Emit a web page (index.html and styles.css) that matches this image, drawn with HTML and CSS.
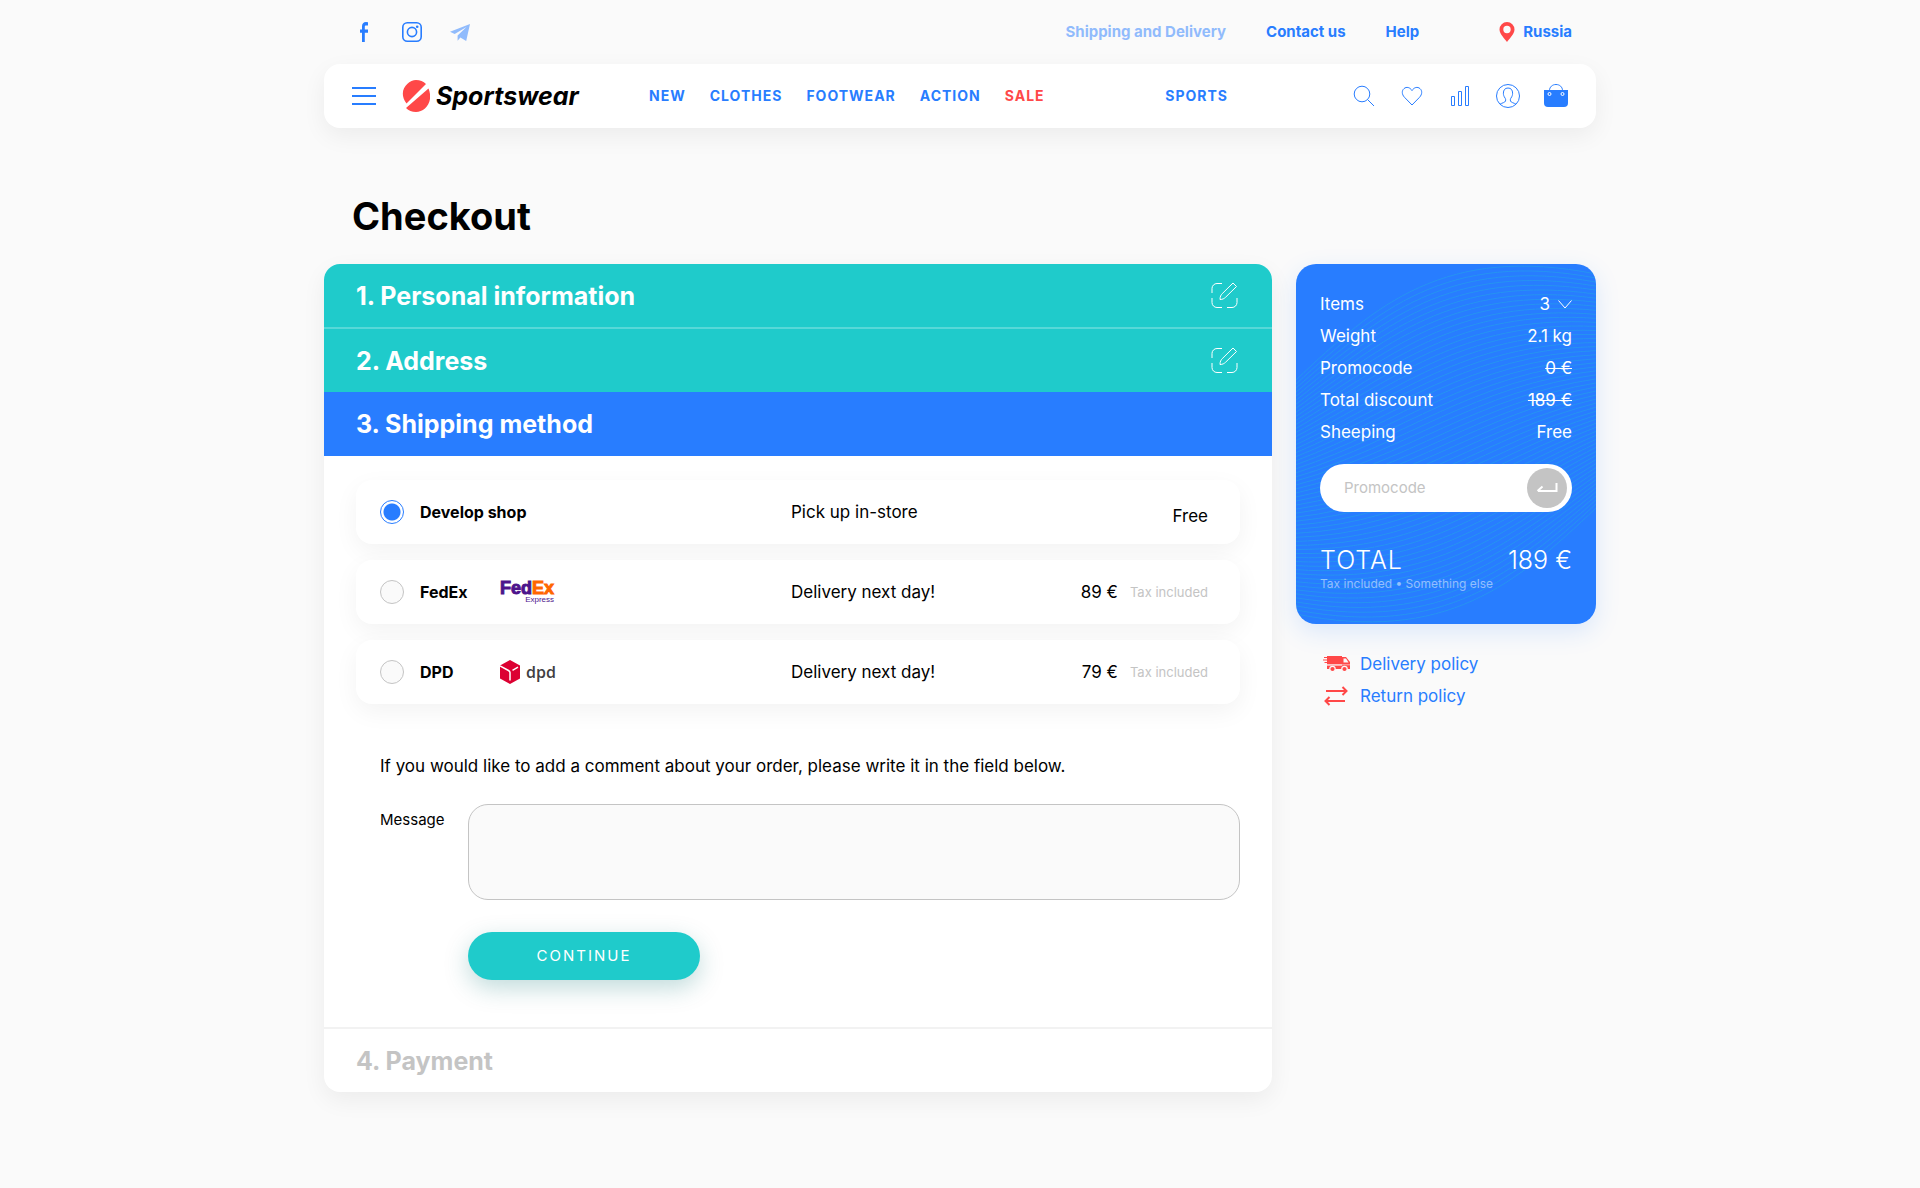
FILE: index.html
```html
<!DOCTYPE html>
<html lang="en">
<head>
<meta charset="utf-8">
<meta name="viewport" content="width=device-width, initial-scale=1">
<title>Checkout – Sportswear</title>
<link rel="stylesheet" href="styles.css">
</head>
<body>
<div class="page">
  <div class="topbar">
    <div class="social">
      <a href="#" aria-label="Facebook"><svg class="icon" viewBox="0 0 24 24"><path fill="currentColor" d="M16 2.2v3.2h-1.8c-1 0-1.4.5-1.4 1.4v2.7H16v3.2h-3.2V22H10v-9.300H8V9.500h2V6.300C10 3.600 11.500 2 14 2z"/></svg></a>
      <a href="#" aria-label="Instagram"><svg class="icon" viewBox="0 0 24 24" fill="none" stroke="currentColor" stroke-width="1.600"><rect x="2.800" y="2.800" width="18.400" height="18.400" rx="4.500"/><circle cx="12" cy="12" r="4.600"/><circle cx="17.200" cy="6.800" r="1.300" fill="currentColor" stroke="none"/></svg></a>
      <a class="faded" href="#" aria-label="Telegram"><svg class="icon" viewBox="0 0 24 24"><path fill="currentColor" d="M22 4 2 11.700l4.700 2.400L18.500 7 9.600 15.500v5.300l2.800-3.300 5.800 3.500z"/></svg></a>
    </div>
    <nav class="toplinks" aria-label="Service">
      <a class="faded" href="#">Shipping and Delivery</a>
      <a href="#">Contact us</a>
      <a href="#">Help</a>
    </nav>
    <a class="country" href="#"><svg class="pin" viewBox="0 0 16 20"><path fill="#ff4848" fill-rule="evenodd" d="M8 0a7.500 7.500 0 0 0-7.500 7.500C.5 12 6 17 8 20c2-3 7.500-8 7.500-12.500A7.500 7.500 0 0 0 8 0m0 3.800a3.700 3.700 0 1 1 0 7.400 3.700 3.700 0 0 1 0-7.400"/></svg>Russia</a>
  </div>

  <header class="header">
    <button class="iconbtn" type="button" aria-label="Menu"><svg class="icon" viewBox="0 0 24 24" stroke="currentColor" stroke-width="2"><path d="M0 4h24M0 12h24M0 20h24"/></svg></button>
    <a class="logo" href="#"><svg class="mark" viewBox="0 0 28 32"><path fill="#ff4848" d="M4.500 23.500C-5 11 6 0 14 0c4 0 7.500 1.300 10 4zM26.500 8.500C32 22 23 32 14 32c-4 0-7.500-1.600-10-4z"/></svg>Sportswear</a>
    <nav class="nav" aria-label="Catalogue">
      <a href="#">NEW</a>
      <a href="#">CLOTHES</a>
      <a href="#">FOOTWEAR</a>
      <a href="#">ACTION</a>
      <a class="sale" href="#">SALE</a>
    </nav>
    <a class="sports" href="#">SPORTS</a>
    <div class="tools">
      <button class="iconbtn" type="button" aria-label="Search"><svg class="icon" viewBox="0 0 24 24" fill="none" stroke="currentColor"><circle cx="10" cy="10" r="7.800"/><path d="m15.500 15.500 6.500 6.500"/></svg></button>
      <a href="#" aria-label="Favourites"><svg class="icon" viewBox="0 0 24 24" fill="none" stroke="currentColor"><path d="M12 21 4.500 13.300C1.500 10.200 1.800 6.400 4 4.600c2.500-2.200 6-1.300 8 2 2-3.300 5.500-4.200 8-2 2.200 1.800 2.500 5.600-.5 8.700z"/></svg></a>
      <a href="#" aria-label="Compare"><svg class="icon" viewBox="0 0 24 24" fill="none" stroke="currentColor"><path d="M3.500 12.500h3v9h-3zM10.500 7.500h3v14h-3zM17.500 2.500h3v19h-3z"/></svg></a>
      <a href="#" aria-label="Account"><svg class="icon" viewBox="0 0 24 24" fill="none" stroke="currentColor"><circle cx="12" cy="12" r="11.500"/><path d="M4 20.200c2-1.400 5-1.500 5.500-3.200.4-1.500 0-2.300-.5-3-1.200-1.800-1.600-3-1.600-4.800C7.400 6 9 4 12 4s4.600 2 4.600 5.200c0 1.800-.4 3-1.600 4.800-.5.7-.9 1.500-.5 3 .5 1.700 3.500 1.800 5.500 3.200"/></svg></a>
      <a href="#" aria-label="Cart"><svg class="icon" viewBox="0 0 24 24"><path fill="none" stroke="currentColor" d="M5.500 8V6.500c0-3.500 2.800-6 6.500-6s6.500 2.500 6.500 6V8"/><path fill="currentColor" d="M0 6h24v13a4 4 0 0 1-4 4H4a4 4 0 0 1-4-4z"/><circle cx="5.500" cy="10" r="1.500" fill="none" stroke="#fff"/><circle cx="18.500" cy="10" r="1.500" fill="none" stroke="#fff"/></svg></a>
    </div>
  </header>

  <h1 class="title">Checkout</h1>

  <main class="layout">
    <section class="steps">
      <div class="step done">
        <h2>1. Personal information</h2>
        <button class="iconbtn" type="button" aria-label="Edit personal information"><svg class="edit" viewBox="0 0 28 28" fill="none" stroke="currentColor"><path d="M12 1.500H7a5 5 0 0 0-5 5V11M2 16v4.500a5 5 0 0 0 5 5h5M17 25.500h5a5 5 0 0 0 5-5V16"/><path d="M10 17.500c0-3 1-4.500 2.200-5.800L23 1l3.500 3.500L15.500 15.300c-1.300 1.200-2.800 2.200-5.500 2.200z"/></svg></button>
      </div>
      <div class="step done ruled">
        <h2>2. Address</h2>
        <button class="iconbtn" type="button" aria-label="Edit address"><svg class="edit" viewBox="0 0 28 28" fill="none" stroke="currentColor"><path d="M12 1.500H7a5 5 0 0 0-5 5V11M2 16v4.500a5 5 0 0 0 5 5h5M17 25.500h5a5 5 0 0 0 5-5V16"/><path d="M10 17.500c0-3 1-4.500 2.200-5.800L23 1l3.500 3.500L15.500 15.300c-1.300 1.200-2.800 2.200-5.500 2.200z"/></svg></button>
      </div>
      <div class="step current"><h2>3. Shipping method</h2></div>
      <form class="shipping">
        <div class="options">
          <label class="option">
            <input type="radio" name="method" checked>
            <span class="carrier">Develop shop</span>
            <span class="when">Pick up in-store</span>
            <span class="price free">Free</span>
          </label>
          <label class="option">
            <input type="radio" name="method">
            <span class="carrier">FedEx</span>
            <span class="brand fedex"><span class="fedex-name">Fed<span class="ex">Ex</span></span><span class="express">Express</span></span>
            <span class="when">Delivery next day!</span>
            <span class="price">89 € <small>Tax included</small></span>
          </label>
          <label class="option">
            <input type="radio" name="method">
            <span class="carrier">DPD</span>
            <span class="brand dpd"><svg class="cube" viewBox="0 0 20 24"><path fill="#dc0032" d="m10 0 10 5.500v13L10 24 0 18.500v-13z"/><path fill="none" stroke="#fff" stroke-width="1.500" d="m0 5.800 8.500 4.700c1 .6 1.500 1 1.500 2V20.500M12.500 10.300 18 7.200"/></svg>dpd</span>
            <span class="when">Delivery next day!</span>
            <span class="price">79 € <small>Tax included</small></span>
          </label>
        </div>
        <p class="hint">If you would like to add a comment about your order, please write it in the field below.</p>
        <div class="comment">
          <label for="message">Message</label>
          <textarea id="message"></textarea>
          <button class="continue" type="submit">CONTINUE</button>
        </div>
      </form>
      <div class="step pending"><h2>4. Payment</h2></div>
    </section>

    <aside>
      <section class="summary">
        <svg class="waves" id="waves" viewBox="0 0 300 360" preserveAspectRatio="none" aria-hidden="true"></svg>
        <dl class="rows">
          <div><dt>Items</dt><dd><button class="items" type="button">3 <svg class="chevron" viewBox="0 0 14 9" fill="none" stroke="currentColor"><path d="m.5.5 6.500 7.500L13.500.5"/></svg></button></dd></div>
          <div><dt>Weight</dt><dd>2.1 kg</dd></div>
          <div><dt>Promocode</dt><dd><s>0 €</s></dd></div>
          <div><dt>Total discount</dt><dd><s>189 €</s></dd></div>
          <div><dt>Sheeping</dt><dd>Free</dd></div>
        </dl>
        <form class="promo">
          <input type="text" placeholder="Promocode" aria-label="Promocode">
          <button type="submit" aria-label="Apply promocode"><svg viewBox="0 0 24 12" fill="none" stroke="#fff" stroke-width="2"><path d="M21.500 1v8H3M7.500 4.500 2.500 9"/></svg></button>
        </form>
        <div class="total"><span class="total-label">TOTAL</span><span>189 €</span></div>
        <p class="note">Tax included • Something else</p>
      </section>
      <ul class="policies">
        <li><a href="#"><svg viewBox="0 0 28 20"><path fill="#ff4848" d="M5 2h15v8.500H5zM20 3h4l4 5v7H5v-3.500h15z"/><path stroke="#ff4848" d="M2 3.500h6M1 6h6M2.500 8.500H7"/><path fill="#fafafa" d="M21.500 4.500H24l2.500 4h-5z"/><path stroke="#fafafa" stroke-width=".6" d="M5 10.800h23"/><g fill="#ff4848" stroke="#fafafa" stroke-width="1.200"><circle cx="10.500" cy="15" r="2.700"/><circle cx="22.500" cy="15" r="2.700"/></g></svg>Delivery policy</a></li>
        <li><a href="#"><svg viewBox="0 0 28 20" fill="none" stroke="#ff4848" stroke-width="2"><path d="M4 5h20M20.500 1l4 4-4 4M23 15H4M7.500 11l-4 4 4 4"/></svg>Return policy</a></li>
      </ul>
    </aside>
  </main>
</div>
<script src="waves.js"></script>
</body>
</html>
```
FILE: styles.css
```css
:root {
  --blue: #287dff;
  --teal: #1fcbcb;
  --red: #ff4848;
  --grey: #c4c4c4;
  --paper: #fafafa;
  --shadow: 0 8px 24px rgba(0, 0, 0, .06);
}

*, *::before, *::after { box-sizing: border-box; }

body {
  margin: 0;
  background: var(--paper);
  color: #000;
  font: 17px/32px Inter, "Open Sans", sans-serif;
}

h1, h2, p, dl, dd, ul { margin: 0; padding: 0; }
ul { list-style: none; }
a { color: inherit; text-decoration: none; }
svg { display: block; flex: none; }
button, input, textarea { font: inherit; color: inherit; }
button { border: 0; padding: 0; background: none; cursor: pointer; }

.page { max-width: 1272px; margin: 0 auto; padding-bottom: 96px; }
.icon { width: 24px; height: 24px; }
.faded { opacity: .5; }

.topbar {
  display: flex;
  align-items: center;
  height: 64px;
  padding: 0 24px 0 28px;
  color: var(--blue);
  font-size: 14px;
  font-weight: 700;
}
.social { display: flex; gap: 24px; }
.toplinks { display: flex; gap: 40px; margin-left: auto; }
.toplinks, .country { font-size: 15px; }
.country { display: flex; align-items: center; gap: 8px; margin-left: 80px; }
.pin { width: 16px; height: 20px; }

.header {
  display: flex;
  align-items: center;
  height: 64px;
  padding: 0 28px;
  border-radius: 16px;
  background: #fff;
  box-shadow: var(--shadow);
  color: var(--blue);
}
.logo {
  display: flex;
  align-items: center;
  gap: 6px;
  width: 247px;
  margin-left: 26px;
  color: #000;
  font-size: 25px;
  font-weight: 700;
  font-style: italic;
}
.mark { width: 28px; height: 32px; }
.nav { display: flex; gap: 24px; }
.nav, .sports { font-size: 14px; font-weight: 700; letter-spacing: 1px; }
.sale { color: var(--red); }
.sports { margin-left: auto; }
.tools { display: flex; gap: 24px; margin-left: 124px; }

.title { padding: 64px 28px 24px; font-size: 38px; line-height: 48px; font-weight: 700; }

.layout {
  display: grid;
  grid-template-columns: minmax(0, 1fr) 300px;
  gap: 24px;
  align-items: start;
}

.steps { border-radius: 16px; background: #fff; box-shadow: var(--shadow); }
.step {
  display: flex;
  align-items: center;
  justify-content: space-between;
  height: 64px;
  padding: 0 34px 0 32px;
  color: #fff;
}
.step:first-child { border-radius: 16px 16px 0 0; }
.step h2 { font-size: 25px; line-height: 32px; font-weight: 700; }
.done { background: var(--teal); }
.current { background: var(--blue); }
.ruled, .pending { height: 65px; margin-top: -1px; border-top: 2px solid #57d8d8; }
.pending { border-color: #f2f2f2; color: var(--grey); }
.edit { width: 28px; height: 28px; }

.shipping { padding: 24px 32px 48px; }
.options { display: grid; gap: 16px; }
.option {
  display: grid;
  grid-template-columns: 24px 80px 259px 1fr auto;
  column-gap: 16px;
  align-items: center;
  height: 64px;
  padding: 0 32px 0 24px;
  border-radius: 16px;
  background: #fff;
  box-shadow: 0 8px 24px rgba(0, 0, 0, .05);
}
.option input {
  appearance: none;
  width: 24px;
  height: 24px;
  margin: 0;
  border: 1px solid var(--grey);
  border-radius: 50%;
  background: var(--paper);
}
.option input:checked {
  border-color: var(--blue);
  background: radial-gradient(circle, var(--blue) 8px, #fff 9px);
}
.carrier { grid-column: 2; grid-row: 1; font-size: 16px; font-weight: 700; white-space: nowrap; }
.brand { grid-column: 3; grid-row: 1; justify-self: start; margin-left: -16px; }
.when { grid-column: 4; grid-row: 1; }
.price { grid-column: 5; grid-row: 1; display: flex; gap: 12px; }
.price small { font-size: 13px; color: var(--grey); }
.free { padding-top: 8px; }
.fedex { display: grid; font-family: "Liberation Sans", sans-serif; color: #4d148c; }
.fedex-name { font-size: 18px; line-height: 16px; font-weight: 700; -webkit-text-stroke: 1px; }
.ex { color: #f60; }
.express { justify-self: end; font-size: 8px; line-height: 8px; }
.dpd { display: flex; align-items: center; gap: 6px; color: #414042; font: 600 16px/24px "Open Sans", sans-serif; }
.cube { width: 20px; height: 24px; }

.hint { padding: 48px 24px 24px; line-height: 28px; }
.comment {
  display: grid;
  grid-template-columns: 64px minmax(0, 1fr);
  gap: 32px 24px;
  align-items: start;
  padding-left: 24px;
}
.comment label { font-size: 15px; }
.comment textarea {
  display: block;
  width: 100%;
  height: 96px;
  padding: 12px 24px;
  border: 1px solid var(--grey);
  border-radius: 20px;
  background: var(--paper);
  resize: none;
}
.continue {
  grid-column: 2;
  width: 232px;
  height: 48px;
  border-radius: 24px;
  background: var(--teal);
  box-shadow: 0 8px 24px rgba(0, 110, 110, .25);
  color: #fff;
  font-size: 15px;
  letter-spacing: 2px;
}

.summary {
  position: relative;
  padding: 24px;
  border-radius: 20px;
  background: var(--blue);
  box-shadow: 0 8px 24px rgba(40, 125, 255, .15);
  color: #fff;
}
.waves {
  position: absolute;
  inset: 0;
  width: 100%;
  height: 100%;
  border-radius: 20px;
  fill: none;
  stroke: #1fcbcb;
  stroke-opacity: .28;
}
.rows, .promo, .total, .note { position: relative; }
.rows > div, .total { display: flex; justify-content: space-between; }
.items { display: flex; align-items: center; gap: 8px; }
.chevron { width: 14px; height: 9px; }
.promo {
  display: flex;
  align-items: center;
  height: 48px;
  margin-top: 16px;
  padding: 0 5px 0 24px;
  border-radius: 24px;
  background: #fff;
}
.promo input { flex: 1; min-width: 0; padding: 0; border: 0; outline: 0; background: none; color: #000; font-size: 15px; }
.promo input::placeholder { color: var(--grey); opacity: 1; }
.promo button { display: grid; place-items: center; width: 40px; height: 40px; border-radius: 50%; background: var(--grey); }
.promo svg { width: 24px; height: 12px; }
.total { margin-top: 32px; font-size: 25px; font-weight: 300; }
.total-label { letter-spacing: 1px; }
.note { padding-bottom: 8px; color: rgba(255, 255, 255, .5); font-size: 12px; line-height: 16px; }

.policies { padding: 24px 26px; color: var(--blue); }
.policies a { display: flex; align-items: center; gap: 10px; }
.policies svg { width: 28px; height: 20px; }
```
FILE: waves.js
```js
// Fills the summary card with a family of curves blended between two edges.
const first = [0, 116, 80, 40, 150, -20, 300, 10];
const last = [0, 350, 150, 380, 220, 320, 300, 244];
const count = 58;
const svg = document.getElementById("waves");

for (let i = 0; i <= count; i++) {
  const p = first.map((v, k) => v + (last[k] - v) * i / count);
  const path = document.createElementNS("http://www.w3.org/2000/svg", "path");
  path.setAttribute("d", `M${p[0]} ${p[1]}C${p.slice(2).join(" ")}`);
  svg.appendChild(path);
}
```
